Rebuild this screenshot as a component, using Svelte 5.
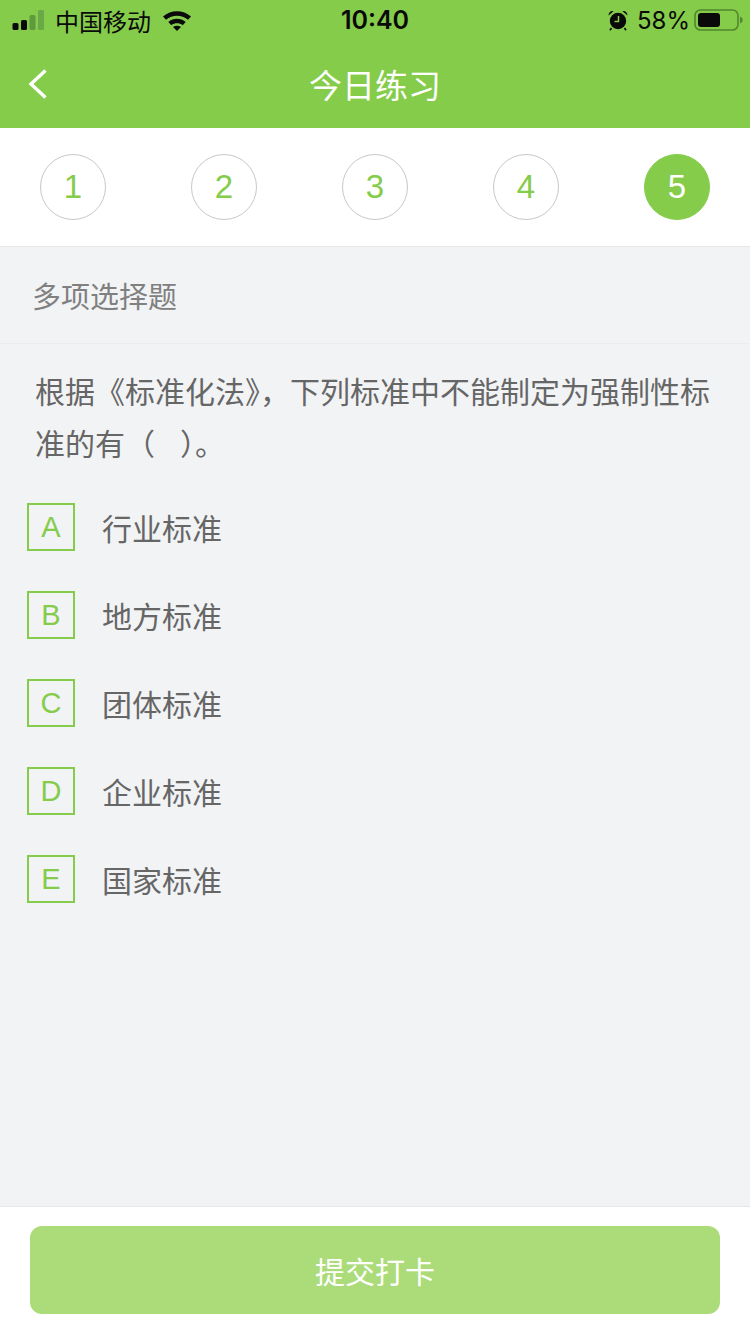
<script lang="ts">
	const steps = [1, 2, 3, 4, 5];
	const current = 5;
	const options = [
		{ key: 'A', label: '行业标准' },
		{ key: 'B', label: '地方标准' },
		{ key: 'C', label: '团体标准' },
		{ key: 'D', label: '企业标准' },
		{ key: 'E', label: '国家标准' }
	];
</script>

<div class="page">
	<header class="top">
		<div class="status">
			<div class="status-left">
				<svg class="signal" width="34" height="22" viewBox="0 0 34 22">
					<rect x="0.5" y="14" width="6" height="7" rx="1.5" fill="#0a0a0a" />
					<rect x="9" y="11" width="6" height="10" rx="1.5" fill="#0a0a0a" />
					<rect x="17.5" y="6" width="6" height="15" rx="1.5" fill="#5f9a3e" />
					<rect x="26" y="1" width="6" height="20" rx="1.5" fill="#6aa948" />
				</svg>
				<span class="carrier">中国移动</span>
				<svg class="wifi" width="30" height="22" viewBox="0 0 30 22">
					<path d="M1 7.5C9 0.5 21 0.5 29 7.5L26 10.8C19.5 5.4 10.5 5.4 4 10.8Z" fill="#0a0a0a" />
					<path d="M6.3 13C11.5 8.8 18.5 8.8 23.7 13L20.7 16.2C17.2 13.6 12.8 13.6 9.3 16.2Z" fill="#0a0a0a" />
					<path d="M11 18C13.3 16.4 16.7 16.4 19 18L15 22Z" fill="#0a0a0a" />
				</svg>
			</div>
			<span class="time">10:40</span>
			<div class="status-right">
				<svg class="alarm" width="22" height="22" viewBox="0 0 22 22">
					<circle cx="11" cy="12" r="8.2" fill="#0a0a0a" />
					<path d="M1.5 6.5C1.5 3.5 4 1.5 6.5 2.2Z M20.5 6.5C20.5 3.5 18 1.5 15.5 2.2Z" fill="#0a0a0a" />
					<path d="M4.5 19L3 21.2 M17.5 19L19 21.2" stroke="#0a0a0a" stroke-width="1.6" />
					<path d="M11.5 7V12.5H7.5" stroke="#85cc4b" stroke-width="1.5" fill="none" />
				</svg>
				<span class="percent">58%</span>
				<svg class="battery" width="50" height="24" viewBox="0 0 50 24">
					<rect x="1" y="2" width="43" height="20" rx="5.5" fill="none" stroke="#52862f" stroke-width="1.6" />
					<rect x="4" y="5" width="22" height="14" rx="3" fill="#0a0a0a" />
					<path d="M46 8.5C48 9.2 48.6 10.5 48.6 12S48 14.8 46 15.5Z" fill="#52862f" />
				</svg>
			</div>
		</div>
		<div class="nav">
			<svg class="back" width="22" height="34" viewBox="0 0 22 34">
				<path d="M18.5 3.5L4 17L18.5 30.5" fill="none" stroke="#fff" stroke-width="3.4" />
			</svg>
			<h1>今日练习</h1>
		</div>
	</header>

	<div class="steps">
		{#each steps as n}
			<div class="step" class:active={n === current}>{n}</div>
		{/each}
	</div>

	<main class="body">
		<div class="kind">多项选择题</div>
		<p class="question">根据《标准化法》，下列标准中不能制定为强制性标准的有（&nbsp;&nbsp;&nbsp;）。</p>
		<ul class="options">
			{#each options as o}
				<li>
					<span class="key">{o.key}</span>
					<span class="label">{o.label}</span>
				</li>
			{/each}
		</ul>
	</main>

	<footer class="bottom">
		<button class="submit">提交打卡</button>
	</footer>
</div>

<style>
	:global(body) {
		margin: 0;
	}
	.page {
		width: 750px;
		height: 1334px;
		display: flex;
		flex-direction: column;
		background: #f2f3f5;
		font-family: 'Liberation Sans', 'Noto Sans CJK SC', sans-serif;
		overflow: hidden;
	}
	.top {
		height: 128px;
		background: #85cc4b;
		flex: none;
	}
	.status {
		height: 40px;
		padding: 0 12px;
		display: grid;
		grid-template-columns: 1fr auto 1fr;
		align-items: center;
		color: #0a0a0a;
	}
	.status-left {
		display: flex;
		align-items: center;
	}
	.carrier {
		font-size: 24px;
		margin-left: 9px;
	}
	.wifi {
		margin-left: 11px;
	}
	.time {
		font-family: Inter, 'Liberation Sans', sans-serif;
		font-size: 25px;
		font-weight: 600;
	}
	.status-right {
		display: flex;
		align-items: center;
		justify-content: flex-end;
		margin-right: -6px;
	}
	.percent {
		font-family: Inter, 'Liberation Sans', sans-serif;
		font-size: 24px;
		margin-left: 8px;
		margin-right: 4px;
	}
	.nav {
		position: relative;
		height: 88px;
		display: flex;
		align-items: center;
		justify-content: center;
	}
	.back {
		position: absolute;
		left: 27px;
		top: 27px;
	}
	.nav h1 {
		margin: 0 0 1px;
		font-size: 33px;
		font-weight: 400;
		color: #fff;
	}
	.steps {
		height: 119px;
		flex: none;
		box-sizing: border-box;
		padding: 0 40px;
		background: #fff;
		border-bottom: 1px solid #e8e8e8;
		display: flex;
		align-items: center;
		justify-content: space-between;
	}
	.step {
		width: 66px;
		height: 66px;
		box-sizing: border-box;
		border: 1px solid #c8c8c8;
		border-radius: 50%;
		display: flex;
		align-items: center;
		justify-content: center;
		font-size: 33px;
		color: #85cc4b;
	}
	.step.active {
		background: #85cc4b;
		border-color: #85cc4b;
		color: #fff;
	}
	.body {
		flex: 1;
		min-height: 0;
	}
	.kind {
		height: 97px;
		box-sizing: border-box;
		padding: 0 32px;
		border-bottom: 1px solid #ebecee;
		display: flex;
		align-items: center;
		font-size: 29px;
		color: #808080;
	}
	.question {
		margin: 0;
		padding: 23px 20px 0 35px;
		font-size: 30px;
		line-height: 52px;
		color: #666;
	}
	.options {
		list-style: none;
		margin: 12px 0 0;
		padding: 0 0 0 27px;
	}
	.options li {
		height: 88px;
		display: flex;
		align-items: center;
	}
	.key {
		width: 48px;
		height: 48px;
		box-sizing: border-box;
		border: 2px solid #85cc4b;
		display: flex;
		align-items: center;
		justify-content: center;
		font-size: 29px;
		color: #85cc4b;
	}
	.label {
		margin-left: 27px;
		font-size: 30px;
		color: #666;
	}
	.bottom {
		height: 128px;
		flex: none;
		box-sizing: border-box;
		padding: 19px 30px 0;
		background: #fff;
		border-top: 1px solid #e6e7e9;
	}
	.submit {
		display: block;
		width: 690px;
		height: 88px;
		border: 0;
		border-radius: 12px;
		background: #abdc79;
		color: #fff;
		font-family: inherit;
		font-size: 30px;
	}
</style>
